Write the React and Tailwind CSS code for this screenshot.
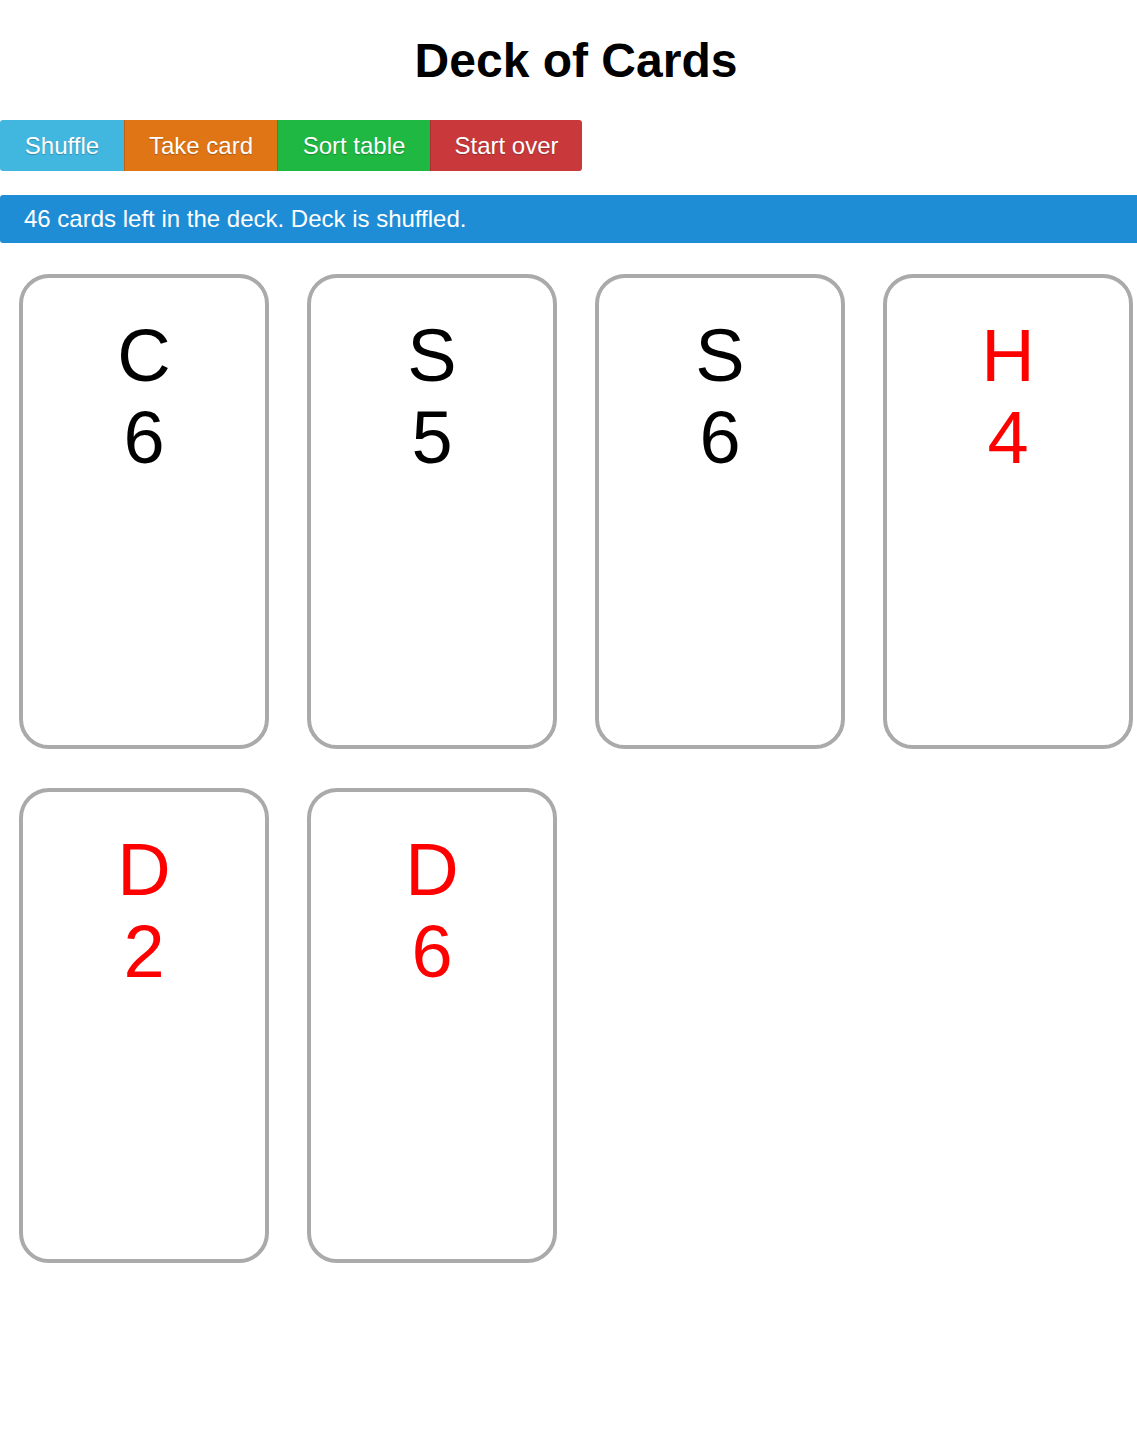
const buttons = [
  { label: "Shuffle", className: "w-[124px] bg-[#41b7e0] rounded-l-[3px]" },
  { label: "Take card", className: "w-[153px] bg-[#e07516] border-l border-black/15" },
  { label: "Sort table", className: "w-[153px] bg-[#1fb843] border-l border-black/15" },
  { label: "Start over", className: "w-[152px] bg-[#c9393c] border-l border-black/15 rounded-r-[3px]" },
];

const cards = [
  { suit: "C", rank: "6" },
  { suit: "S", rank: "5" },
  { suit: "S", rank: "6" },
  { suit: "H", rank: "4" },
  { suit: "D", rank: "2" },
  { suit: "D", rank: "6" },
];

const Card = ({ suit, rank }) => {
  const red = suit === "H" || suit === "D";
  return (
    <div className="mx-[19px] my-[19.5px] h-[475px] rounded-[30px] border-4 border-[#aaaaaa] bg-white pt-[37px]">
      <div
        className={
          "flex flex-col items-center text-[74px] leading-[82px] " +
          (red ? "text-[#ff0000]" : "text-black")
        }
      >
        <span>{suit}</span>
        <span>{rank}</span>
      </div>
    </div>
  );
};

export default function App() {
  return (
    <div className="w-full overflow-x-hidden bg-white min-h-[1431px]">
      <div className="w-[1152px] font-['Liberation_Sans',Arial,sans-serif]">
        <h1 className="pt-[29px] text-center text-[48px] font-bold leading-[64px] text-black">
          Deck of Cards
        </h1>
        <div className="mt-[27px] flex">
          {buttons.map((b) => (
            <button
              key={b.label}
              className={
                "h-[51px] text-[24px] text-white [text-shadow:0_1px_1px_rgba(0,0,0,0.25)] " +
                b.className
              }
            >
              {b.label}
            </button>
          ))}
        </div>
        <div className="mt-6 flex h-[48px] items-center rounded-l-[3px] bg-[#1f8dd6] px-6 text-[24px] text-white">
          46 cards left in the deck. Deck is shuffled.
        </div>
        <div className="mt-[11px] grid grid-cols-4">
          {cards.map((c, i) => (
            <Card key={i} suit={c.suit} rank={c.rank} />
          ))}
        </div>
      </div>
    </div>
  );
}
